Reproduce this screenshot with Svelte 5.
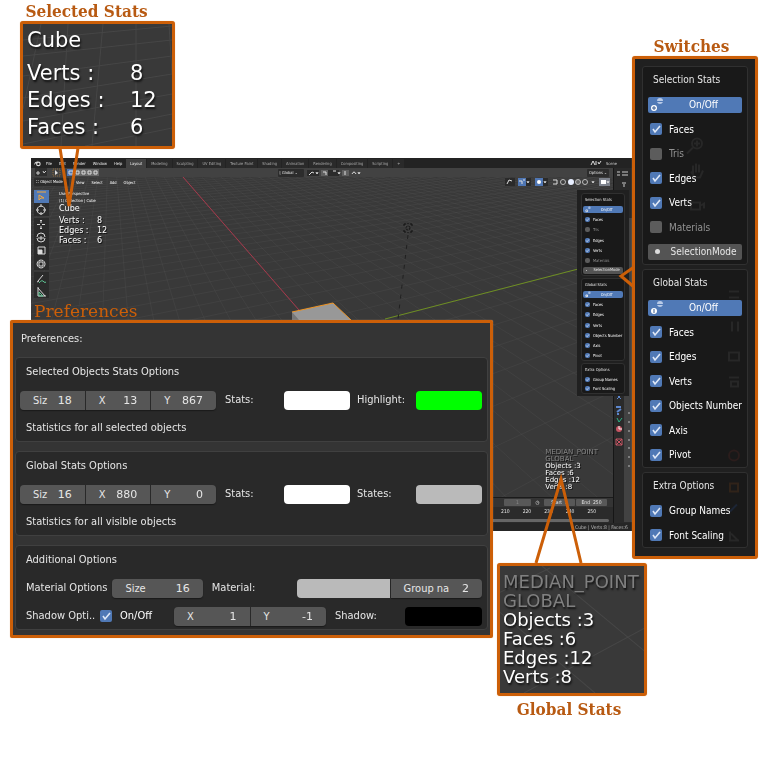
<script>
  const switchGroups = [
    {
      title: 'Selection Stats', master: true, plus: true, mode: 'SelectionMode', cls: 'tall',
      items: [['Faces', true], ['Tris', false], ['Edges', true], ['Verts', true], ['Materials', false]]
    },
    {
      title: 'Global Stats', master: true, plus: false, mode: '', cls: 'tall',
      items: [['Faces', true], ['Edges', true], ['Verts', true], ['Objects Number', true], ['Axis', true], ['Pivot', true]]
    },
    {
      title: 'Extra Options', master: false, plus: false, mode: '', cls: 'short',
      items: [['Group Names', true], ['Font Scaling', true]]
    }
  ];

  const statGroups = [
    {
      title: 'Selected Objects Stats Options', note: 'Statistics for all selected objects',
      fields: [['Siz', '18'], ['X', '13'], ['Y', '867']],
      colors: [['Stats:', '#ffffff'], ['Highlight:', '#00ff00']]
    },
    {
      title: 'Global Stats Options', note: 'Statistics for all visible objects',
      fields: [['Siz', '16'], ['X', '880'], ['Y', '0']],
      colors: [['Stats:', '#ffffff'], ['States:', '#bababa']]
    }
  ];

  const selected = [['Verts :', '8'], ['Edges :', '12'], ['Faces :', '6']];
  const globals = ['MEDIAN_POINT', 'GLOBAL', 'Objects :3', 'Faces :6', 'Edges :12', 'Verts :8'];
  const menus = ['File', 'Edit', 'Render', 'Window', 'Help'];
  const tabs = ['Layout', 'Modeling', 'Sculpting', 'UV Editing', 'Texture Paint', 'Shading', 'Animation', 'Rendering', 'Compositing', 'Scripting', '+'];
  const frames = ['210', '220', '230', '240', '250'];

  const tools = [
    { d: 'M3 2h9M5 5v5l2-2h3z', on: true },
    { d: 'M7 3a4 4 0 1 0 .1 0M7 1v3M7 9v3M2 7h3M9 7h3' },
    { d: 'M7 2v3M7 8v3M3 6.500h3M8 6.500h3M6 3l1-1 1 1M6 10l1 1 1-1', gap: true },
    { d: 'M3 6a4 4 0 0 1 8 0M11 7a4 4 0 0 1-8 0M4 7h6M7 5v4' },
    { d: 'M4 3h7v7h-7zM4 6h4v4', fill: true },
    { d: 'M7 3a4 4 0 1 0 .1 0M5 5h4v4h-4z' },
    { d: 'M4 9l5-6M3 10l2-1', d2: 'M5 11q3-4 5-1 1 1 2 0', gap: true },
    { d: 'M4 2v9h8M4 3l7 8', d2: 'M5 7l4 4h-4z' }
  ];

  // Perspective floor grid: every line runs towards one of two vanishing points.
  const origin = [290, 159];
  const vanishX = [79, -84];
  const vanishY = [1219, -84];
  const a = 0.06;
  const b = 0.024;
  function project(u, v) {
    const w = 1 + u * a + v * b;
    return [0, 1].map((i) => Math.round(((origin[i] + u * a * vanishX[i] + v * b * vanishY[i]) / w) * 10) / 10);
  }
  function segment(p, q) {
    return `M${p[0]} ${p[1]}L${q[0]} ${q[1]}`;
  }
  let grid = '';
  for (let v = -36; v <= 70; v += 1) {
    const start = (-0.96 - v * b) / a;
    grid += segment(project(Math.max(start, -60), v), project(95, v));
  }
  for (let u = -14; u <= 85; u += 1) {
    const start = (-0.96 - u * a) / b;
    grid += segment(project(u, Math.max(start, -200)), project(u, 220));
  }
</script>

{#snippet powerIcon(plus)}
  <svg class="power" viewBox="0 0 14 16" aria-hidden="true">
    <path d="M7 4a3 3 0 0 1 6 0zM7 5h6q-1 2-3 2t-3-2z" fill="#b9cbe8" />
    <circle cx="4" cy="11" r="3" fill="#fff" />
    <path d={plus ? 'M4 9v4M2 11h4' : 'M4 9v4'} stroke="#35588f" stroke-width="1" />
  </svg>
{/snippet}

{#snippet switchPanel()}
  {#each switchGroups as group}
    <section class="group {group.cls}">
      <h3>{group.title}</h3>
      {#if group.master}
        <button class="master">{@render powerIcon(group.plus)}<span>On/Off</span></button>
      {/if}
      {#each group.items as [name, on]}
        <label class="switch" class:off={!on}><input type="checkbox" checked={on} />{name}</label>
      {/each}
      {#if group.mode}
        <button class="mode"><i></i><span>{group.mode}</span></button>
      {/if}
    </section>
  {/each}
{/snippet}

{#snippet numberField(name, value)}
  <label class="field"><span>{name}</span><input type="text" {value} /></label>
{/snippet}

<main class="stage">
  <section class="editor" aria-label="Editor">
    <header class="topbar">
      <svg class="logo" viewBox="0 0 8 8"><path d="M0 5l4-3.500M1 3h4" stroke="#ddd" /><circle cx="5" cy="4.500" r="2" fill="none" stroke="#ddd" stroke-width="1.300" /></svg>
      <nav class="menus">{#each menus as m}<a href="#menu">{m}</a>{/each}</nav>
      <nav class="tabs">{#each tabs as t, i}<a href="#tab" class:active={i === 0}>{t}</a>{/each}</nav>
      <span class="scene"><svg viewBox="0 0 12 8"><path d="M1 6l2-4 2 4M6 2v4M8 3l1 2 2-3" fill="none" stroke="#ddd" /></svg>Scene</span>
    </header>

    <div class="toolbar">
      <svg class="start" viewBox="0 0 66 9">
        <path d="M2 0h12v8H2z" fill="#2e2e2e" /><path d="M3 5h4M5 3v4M10 3l1 2 2-2" fill="none" stroke="#ccc" />
        <path d="M20 1h7v7h-7z" fill="none" stroke="#8b693a" stroke-dasharray="1 1" /><path d="M22 2v5l3-2z" fill="#ddd" />
        <path d="M34 1h7v7h-7z" fill="#4f76b3" /><path d="M42 1h24v7H42z" fill="#696969" />
        <path d="M36 3h4v3h-4zM43 3h3v3h-3zM49 3h3v3h-3zM55 3h3v3h-3zM61 3h3v3h-3z" fill="none" stroke="#ddd" />
      </svg>
      <div class="orient">
        <span class="chip">⌊ Global ⌄</span>
        <svg viewBox="0 0 54 8"><path d="M0 1h12v6H0zM20 1h12v6H20z" fill="#2b2b2b" /><path d="M14 1h7v6h-7zM35 1h7v6h-7z" fill="#606060" /><path d="M2 6l3-3 2 1M9 3l1 2 1-2M16 3h3v3M26 2h3M31 3l1 2 1-2M38 2v4M45 5q2-4 4 0M51 3l1 2 1-2" fill="none" stroke="#ddd" /></svg>
      </div>
      <span class="chip options">Options ⌄</span>
    </div>

    <div class="viewport">
      <svg class="scene3d" aria-hidden="true">
        <path d={grid} fill="none" stroke="#595959" stroke-opacity=".5" stroke-width=".5" />
        <path d="M152 0L268 133" stroke="#a8384b" stroke-width="1" />
        <path d="M354 142L582 83" stroke="#6e8f22" stroke-width="1" />
        <path d="M377 58L367 142" stroke="#202020" stroke-dasharray="4 6" />
        <circle cx="377" cy="51" r="2" fill="none" stroke="#111" stroke-dasharray="2 1" />
        <path d="M373 47h2M379 47h2M373 55h2M379 55h2M373 47v2M381 47v2M373 53v2M381 53v2M377 46v1M377 55v1" stroke="#111" />
        <path d="M261 135l41-9 18 17h-59z" fill="#989898" /><path d="M261 135l7 8h-7z" fill="#777" />
        <path d="M261 135l41-9 18 17" fill="none" stroke="#f09422" stroke-width="1" />
      </svg>
      <header class="viewbar">
        <span class="chip">⛶ Object Mode ⌄</span><span>View</span><span>Select</span><span>Add</span><span>Object</span>
        <svg class="shading" viewBox="0 0 106 10">
          <path d="M0 1h10v8H0z" fill="#2a2a2a" /><path d="M13 1h8v8h-8zM30 1h8v8h-8z" fill="#4f76b3" />
          <path d="M21 1h5v8h-5zM38 1h5v8h-5z" fill="#2a2a2a" /><path d="M94 1h11v8H94z" fill="#7d828c" />
          <path d="M2 7l2-4 3 1M14 4h3v3M18 3h2M22 4l1 2 1-2M39 4l1 2 1-2M48 3h4v4h-4M87 4l1 2 1-2M102 4l1 2 1-2" fill="none" stroke="#ddd" />
          <circle cx="34" cy="5" r="2" fill="#fff" /><circle cx="58" cy="5" r="2.500" fill="none" stroke="#bbb" />
          <circle cx="66" cy="5" r="3" fill="#e8efff" /><circle cx="73" cy="5" r="2.500" fill="#666" stroke="#bbb" />
          <circle cx="80" cy="5" r="2.500" fill="none" stroke="#bbb" /><path d="M96 3h5v4h-5z" fill="#fff" />
        </svg>
      </header>
      <div class="view-body">
        <div class="tools">
          {#each tools as t}
            <button class:active={t.on} class:gap={t.gap} aria-label="Tool">
              <svg viewBox="0 0 14 13"><path d={t.d} fill="none" stroke={t.on ? '#f4a83b' : '#d8d8d8'} />{#if t.fill}<path d="M4 6h4v4h-4z" fill="#ddd" />{/if}{#if t.d2}<path d={t.d2} fill="none" stroke="#5fc594" />{/if}</svg>
            </button>
          {/each}
        </div>
        <div class="view-info">
          <p class="tiny">User Perspective</p>
          <p class="tiny">(1) Collection | Cube</p>
          <p class="name">Cube</p>
          <dl>{#each selected as [k, v]}<dt>{k}</dt><dd>{v}</dd>{/each}</dl>
        </div>
      </div>
      <ul class="view-stats">{#each globals as g, i}<li class:dim={i < 2}>{g}</li>{/each}</ul>
    </div>

    <aside class="side">
      <svg viewBox="0 0 19 354">
        <path d="M10 0h9v354h-9z" fill="#424242" /><path d="M0 0h19v50H0z" fill="#292929" />
        <path d="M3 4h3M3 7h3M8 4h6M8 7h6M8 15h4M10 16v3" stroke="#ccc" />
        <path d="M2 224h6M3 227l4 4M7 227l-4 4" stroke="#5c86cc" />
        <path d="M3 244l4-3M2 239h5M3 246h2" stroke="#5c86cc" stroke-width="2" />
        <path d="M3 250l2 4 3-4" fill="none" stroke="#2cb487" />
        <circle cx="5" cy="261" r="3" fill="#c75563" /><path d="M5 258v3l3 0" stroke="#eee" fill="none" />
        <path d="M2 271h6v6H2zM2 271l6 6M8 271l-6 6" fill="none" stroke="#c75563" />
        <path d="M14 245h2M14 254h2M14 263h2M14 272h2M14 280h2M14 289h2M14 298h2" stroke="#bbb" />
      </svg>
    </aside>

    <div class="timeline">
      <div class="playbar"><span class="wide">1</span><span class="clock">◷</span><span>Start&nbsp; 1</span><span>End&nbsp; 250</span></div>
      <div class="ruler">{#each frames as f}<span>{f}</span>{/each}</div>
      <div class="scroll"></div>
    </div>
    <footer class="status">Cube | Verts:8 | Faces:6</footer>
    <div class="popover">{@render switchPanel()}</div>
  </section>

  <section class="callout selected">
    <h2>Selected Stats</h2>
    <div class="frame">
      <svg class="floor" viewBox="0 0 149 122" preserveAspectRatio="none"><path d="M18 0L0 85M80 0L69 122M113 0v122M146 0l3 50M0 16l149-14M0 32l149-16M0 52l149-20M0 74l149-24M0 97l149-27M0 120l149-30M62 122l87-18M45 0L38 122" /></svg>
      <p>Cube</p>
      <dl>{#each selected as [k, v]}<dt>{k}</dt><dd>{v}</dd>{/each}</dl>
    </div>
    <svg class="pointer" viewBox="0 0 22 62"><path d="M2 0L11 58L20 0" /></svg>
  </section>

  <section class="callout switches">
    <h2>Switches</h2>
    <div class="frame">
      {@render switchPanel()}
      <svg class="ghost" viewBox="0 0 120 496" aria-hidden="true">
        <g fill="none" stroke="#272727" stroke-width="2">
          <circle cx="62" cy="84" r="5" /><path d="M58 88l-6 6M59 84h6M62 81v6" />
          <path d="M58 106v8M61 104v9M64 105v8M56 112l4 6h5l3-7M56 143h9v7h-9zM66 146l3-2v5" />
          <path d="M94 232h10M94 238h10M97 262v10M103 262v10M94 293h10v8h-10zM94 318h10M96 322h7v5h-7z" />
          <circle cx="99" cy="396" r="5" stroke="#2b1d1c" /><path d="M95 424h8v8h-8z" stroke="#302318" />
          <path d="M95 452l7-7" stroke="#1c2535" /><path d="M95 472v9h9M96 474l7 7" />
        </g>
      </svg>
    </div>
    <svg class="pointer" viewBox="0 0 16 24"><path d="M15 1L2 10L15 21" /></svg>
  </section>

  <section class="callout prefs">
    <h2>Preferences</h2>
    <div class="frame">
      <h3>Preferences:</h3>
      {#each statGroups as g}
        <section class="box">
          <h4>{g.title}</h4>
          <div class="row seven">
            <div class="fields three">{#each g.fields as [n, v]}{@render numberField(n, v)}{/each}</div>
            {#each g.colors as [n, c]}
              <label class="swatch"><span>{n}</span><input type="color" value={c} /></label>
            {/each}
          </div>
          <p>{g.note}</p>
        </section>
      {/each}
      <section class="box">
        <h4>Additional Options</h4>
        <div class="row five">
          <p>Material Options</p>
          <div class="fields">{@render numberField('Size', '16')}</div>
          <label class="swatch joined"><span>Material:</span><input type="color" value="#bababa" /></label>
          <div class="fields last">{@render numberField('Group na', '2')}</div>
        </div>
        <div class="row six">
          <p>Shadow Opti..</p>
          <label class="shadow-toggle"><input type="checkbox" checked />On/Off</label>
          <div class="fields two">{@render numberField('X', '1')}{@render numberField('Y', '-1')}</div>
          <label class="swatch"><span>Shadow:</span><input type="color" value="#000000" /></label>
        </div>
      </section>
    </div>
  </section>

  <section class="callout global">
    <div class="frame">
      <svg class="floor" viewBox="0 0 144 126" preserveAspectRatio="none"><path d="M0 26L50 2M42 0L144 84M0 46L95 126M24 126L144 62" /></svg>
      <ul>{#each globals as g, i}<li class:dim={i < 2}>{g}</li>{/each}</ul>
    </div>
    <h2>Global Stats</h2>
    <svg class="pointer" viewBox="0 0 50 88"><path d="M2 87L27 3L47 87" /></svg>
  </section>
</main>

<style>
  :global(body) { margin: 0; background: #fff; }
  .stage {
    --orange: #cc5f08;
    --blue: #5079b6;
    position: relative;
    box-sizing: border-box;
    min-height: 768px;
    padding: 158px 136px 0 31px;
    overflow: hidden;
    font-family: "DejaVu Sans Condensed", "DejaVu Sans", sans-serif;
    color: #e6e6e6;
  }
  h2, h3, h4, p, ul, dl, dd { margin: 0; padding: 0; font-weight: 400; }
  ul { list-style: none; }
  a { color: inherit; text-decoration: none; }
  button { border: 0; padding: 0; font: inherit; color: inherit; }
  input { margin: 0; }
  svg { display: block; }
  dl { display: grid; }

  /* editor window */
  .editor {
    position: relative;
    display: grid;
    grid-template-columns: 1fr 19px;
    background: #232323;
    font-size: 5px;
    line-height: 9px;
    white-space: nowrap;
    overflow: hidden;
  }
  .topbar { grid-column: 1 / -1; display: flex; align-items: center; height: 10px; background: #232323; color: #ccc; font-size: 4px; }
  .logo { width: 7px; height: 7px; margin: 0 5px 0 3px; }
  .menus { display: flex; gap: 7px; width: 80px; color: #eee; }
  .tabs { display: flex; flex: 1; color: #aaa; gap: 1px; padding-top: 1px; }
  .tabs a { padding: 0 4px; background: #2a2a2a; }
  .tabs .active { background: #424242; color: #eee; }
  .scene { display: flex; align-items: center; gap: 4px; width: 42px; }
  .scene svg { width: 12px; height: 8px; }
  .toolbar { display: flex; align-items: center; height: 9px; background: #424242; padding: 0 4px 0 2px; font-size: 4px; }
  .start { width: 66px; height: 9px; }
  .orient { display: flex; gap: 3px; margin: 0 auto 0 31%; }
  .orient .chip { min-width: 22px; }
  .orient svg { width: 54px; height: 8px; }
  .chip { background: #2c2c2c; border-radius: 1px; padding: 0 2px; line-height: 8px; }
  .side { grid-column: 2; grid-row: 2 / 5; border-left: 1px solid #161616; background: #2a2a2a; overflow: hidden; }
  .side svg { width: 19px; height: 354px; }
  .viewport { position: relative; height: 320px; background: #393939; overflow: hidden; }
  .scene3d { position: absolute; inset: 0; width: 100%; height: 100%; }
  .viewbar { position: relative; display: flex; align-items: center; gap: 7px; height: 10px; padding: 0 2px 0 3px; }
  .viewbar > span { font-size: 4px; color: #fff; }
  .shading { width: 106px; height: 10px; margin-left: auto; }
  .view-body { position: relative; display: flex; gap: 10px; padding: 3px 0 0 3px; }
  .tools { display: flex; flex-direction: column; }
  .tools button { width: 15px; height: 13px; background: #2b2b2b; }
  .tools .gap { margin-top: 2px; }
  .tools .active { background: var(--blue); }
  .tools svg { width: 14px; height: 13px; }
  .tiny { line-height: 7px; font-size: 4px; color: #fff; }
  .view-info .name { font: 8px/10px "DejaVu Sans", sans-serif; padding-bottom: 2px; color: #fff; }
  .view-info dl { grid-template-columns: 38px auto; font: 8px/10px "DejaVu Sans", sans-serif; color: #fff; text-shadow: 1px 1px #111; }
  .view-stats { position: absolute; right: 15px; bottom: 6px; font: 7px/7px "DejaVu Sans", sans-serif; color: #fff; text-shadow: 1px 1px #111; }
  .dim { color: #858585; }
  .popover {
    --row: 7px;
    --check: 5px;
    --pad: 1px;
    --indent: 2px;
    --label: 3px;
    --tall: 83px;
    --short: 31px;
    position: absolute;
    box-sizing: border-box;
    top: 32px;
    right: 3px;
    width: 52px;
    display: flex;
    flex-direction: column;
    gap: 2px;
    padding: 3px 4px 2px;
    background: #202020;
    font-size: 4px;
  }
  .timeline { grid-column: 1; height: 26px; background: #2b2b2b; border-top: 1px solid #1b1b1b; box-sizing: border-box; }
  .playbar { display: flex; justify-content: flex-end; gap: 1px; height: 9px; padding-right: 6px; align-items: center; background: #343434; }
  .playbar span { width: 31px; background: #585858; text-align: center; line-height: 7px; border-radius: 1px; }
  .playbar .wide { width: 27px; color: #888; }
  .playbar .clock { width: 11px; background: none; }
  .ruler { display: flex; justify-content: flex-end; gap: 13px; height: 9px; padding-right: 17px; }
  .scroll { height: 3px; margin: 3px 4px 0; background: #666; border-radius: 2px; }
  .status { grid-column: 1 / -1; height: 8px; line-height: 8px; text-align: right; background: #262626; padding-right: 4px; color: #bbb; }

  /* shared list of switches */
  .group {
    box-sizing: border-box;
    display: flex;
    flex-direction: column;
    justify-content: space-between;
    padding: var(--indent) var(--pad) calc(var(--indent) - 1px);
    border: 1px solid #303030;
    border-radius: 3px;
    background: #191919;
  }
  .tall { min-height: var(--tall); }
  .short { min-height: var(--short); }
  .group h3 { font-size: inherit; line-height: var(--row); padding-left: var(--indent); }
  .group button { position: relative; display: flex; align-items: center; justify-content: center; height: var(--row); border-radius: 2px; line-height: 1; }
  .group .master { background: var(--blue); color: #fff; padding-left: 18%; }
  .power { position: absolute; left: 2px; top: 0; height: 100%; }
  .group .mode { background: #545454; padding-left: 18%; }
  .mode i { position: absolute; left: 7%; width: calc(var(--check) / 2 - 1px); aspect-ratio: 1; border-radius: 50%; background: #ddd; }
  .switch { display: flex; align-items: center; gap: var(--label); height: var(--row); padding-left: 2px; color: #fff; white-space: nowrap; }
  .switch.off { color: #929292; }
  input[type="checkbox"] {
    appearance: none;
    flex: none;
    width: var(--check);
    height: var(--check);
    border-radius: 2px;
    background: #5c5c5c;
  }
  input[type="checkbox"]:checked {
    background: var(--blue) url("data:image/svg+xml,%3Csvg xmlns='http://www.w3.org/2000/svg' viewBox='0 0 12 12'%3E%3Cpath d='M3 6l2 3 5-6' fill='none' stroke='%23dfe8f7' stroke-width='1.6'/%3E%3C/svg%3E");
  }

  /* callouts */
  .callout { position: absolute; }
  .callout > h2 { font: 700 17px/18px "DejaVu Serif Condensed", "DejaVu Serif", serif; color: #b85a12; text-align: center; white-space: nowrap; }
  .frame { position: relative; box-sizing: border-box; border: 3px solid var(--orange); border-radius: 3px; background: #393939; box-shadow: 0 0 1px #e9ad7c; }
  .pointer { position: absolute; overflow: visible; }
  .pointer path { fill: none; stroke: var(--orange); stroke-width: 3; }
  .floor { position: absolute; inset: 0; width: 100%; height: 100%; }
  .floor path { fill: none; stroke: #464646; stroke-width: 1; }
  .frame > p, .frame > dl, .frame > ul { position: relative; color: #fff; text-shadow: 1px 2px 2px #111; white-space: nowrap; }

  .selected { left: 20px; top: 2px; width: 155px; }
  .selected > h2 { margin: 0 10px 1px -12px; }
  .selected .frame { padding: 3px 4px 5px; font: 21px/27px "DejaVu Sans", sans-serif; }
  .selected p { padding-bottom: 6px; }
  .selected dl { grid-template-columns: 103px auto; }
  .selected .pointer { left: 38px; top: 146px; width: 22px; height: 62px; }

  .switches { right: 10px; top: 37px; width: 126px; }
  .switches > h2 { margin-right: 7px; margin-bottom: 1px; }
  .switches .frame {
    --row: 16px;
    --check: 12px;
    --pad: 5px;
    --indent: 5px;
    --label: 7px;
    --tall: 199px;
    --short: 76px;
    display: flex;
    flex-direction: column;
    gap: 4px;
    padding: 7px 7px 8px;
    background: #202020;
    font-size: 10px;
  }
  .switches .ghost { position: absolute; inset: 0; width: 100%; height: 100%; pointer-events: none; mix-blend-mode: lighten; }
  .switches .pointer { left: -13px; top: 229px; width: 16px; height: 24px; }

  .prefs { left: 10px; right: 275px; top: 302px; }
  .prefs > h2 { font: 400 17px/18px "DejaVu Serif", serif; color: var(--orange); text-align: left; padding-left: 24px; }
  .prefs .frame {
    --check: 12px;
    display: flex;
    flex-direction: column;
    gap: 9px;
    padding: 2px 2px 5px;
    background: #343434;
    border-radius: 2px;
    font-size: 11px;
    line-height: 28px;
    white-space: nowrap;
  }
  .prefs .frame h3 { font-size: inherit; padding-left: 6px; margin-bottom: -5px; }
  .box { border: 1px solid #404040; border-radius: 4px; background: #292929; padding: 0 5px 0 4px; height: 83px; line-height: 28px; }
  .box h4, .box p { font-size: inherit; padding-left: 6px; height: 28px; }
  .row { display: grid; align-items: center; height: 28px; }
  .seven { grid-template-columns: repeat(7, 1fr); }
  .five { grid-template-columns: repeat(5, 1fr); }
  .six { grid-template-columns: repeat(6, 1fr); }
  .fields { display: flex; gap: 1px; margin-right: 2px; border-radius: 4px; overflow: hidden; box-shadow: 0 1px 1px #1a1a1a; }
  .three { grid-column: span 3; }
  .two { grid-column: span 2; }
  .last { margin: 0 0 0 1px; border-radius: 0 4px 4px 0; }
  .field { flex: 1 1 0; min-width: 0; display: flex; height: 19px; line-height: 19px; background: #565656; padding: 0 13px; }
  .field input { flex: 1; width: 0; min-width: 0; border: 0; padding: 0; background: none; text-align: right; color: #e6e6e6; font: 11px/19px "DejaVu Sans", sans-serif; }
  .swatch { grid-column: span 2; display: grid; grid-template-columns: 1fr 1fr; align-items: center; }
  .swatch span { padding-left: 7px; }
  .swatch input { appearance: none; width: 100%; height: 19px; border: 0; padding: 0; border-radius: 4px; background: none; overflow: hidden; }
  .swatch input::-webkit-color-swatch-wrapper { padding: 0; }
  .swatch input::-webkit-color-swatch { border: 0; border-radius: 0; }
  .joined input { border-radius: 4px 0 0 4px; }
  .shadow-toggle { display: flex; align-items: center; gap: 8px; padding-left: 3px; color: #fff; }

  .global { right: 121px; top: 563px; width: 150px; }
  .global .frame { padding: 6px 3px 7px; font: 18px/19px "DejaVu Sans", sans-serif; }
  .global .frame .dim { color: #808080; }
  .global > h2 { margin: 4px 6px 0 0; }
  .global .pointer { left: 37px; top: -87px; width: 50px; height: 88px; }
</style>
